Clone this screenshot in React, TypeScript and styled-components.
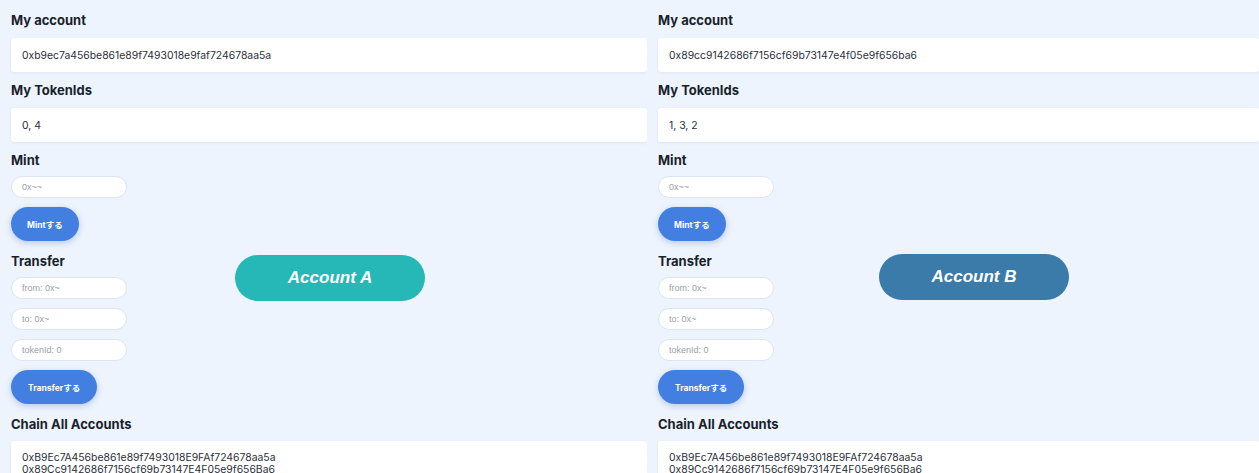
import React from 'react';
import styled, { createGlobalStyle } from 'styled-components';

const GlobalStyle = createGlobalStyle`
  html, body {
    margin: 0;
    padding: 0;
    background: #eef4fd;
    overflow: hidden;
  }
  body {
    font-family: Inter, 'Noto Sans CJK JP', sans-serif;
  }
`;

const Page = styled.div`
  display: flex;
  width: 1259px;
  height: 473px;
  overflow: hidden;
`;

const Panel = styled.div<{ width?: string }>`
  position: relative;
  box-sizing: border-box;
  width: ${({ width }) => width || 'auto'};
  flex: ${({ width }) => (width ? 'none' : '1')};
  padding: 10px 0 0 11px;
  display: flex;
  flex-direction: column;
  overflow: hidden;
`;

const Heading = styled.h2`
  margin: 0;
  height: 20px;
  line-height: 20px;
  font-size: 13px;
  font-weight: 700;
  color: #1a1f2c;
`;

const Card = styled.div`
  margin: 8px 0 8px;
  padding: 0 11px;
  min-height: 34px;
  display: flex;
  flex-direction: column;
  justify-content: center;
  background: #fff;
  border-radius: 3px;
  box-shadow: 0 1px 3px rgba(40, 70, 130, 0.08);
  font-size: 10.4px;
  color: #2a2f3a;
`;

const AccountsCard = styled(Card)`
  justify-content: flex-start;
  margin-top: 7px;
  padding-top: 11px;
  min-height: 60px;
  line-height: 12px;
`;

const Form = styled.div`
  display: flex;
  flex-direction: column;
  align-items: flex-start;
  gap: 9px;
  margin: 6px 0 10px;
`;

const Input = styled.input`
  box-sizing: border-box;
  width: 116px;
  height: 22px;
  padding: 0 10px;
  border: 1px solid #dbe5f6;
  border-radius: 11px;
  background: #fff;
  font-family: 'Liberation Sans', Arial, sans-serif;
  font-size: 9px;
  outline: none;
  &::placeholder {
    color: #9aa0a8;
  }
`;

const ActionButton = styled.button<{ pad?: number }>`
  height: 34px;
  padding: 0 ${({ pad }) => pad ?? 16}px;
  border: none;
  border-radius: 17px;
  background: #427fe0;
  color: #fff;
  font-family: Inter, 'Noto Sans CJK JP', sans-serif;
  font-size: 8.5px;
  font-weight: 700;
  box-shadow: 0 2px 6px rgba(50, 100, 200, 0.3);
`;

const Badge = styled.div<{ bg: string; left: number; top: number }>`
  position: absolute;
  left: ${({ left }) => left}px;
  top: ${({ top }) => top}px;
  width: 190px;
  height: 46px;
  border-radius: 23px;
  background: ${({ bg }) => bg};
  display: flex;
  align-items: center;
  justify-content: center;
  color: #fff;
  font-family: 'Liberation Sans', Arial, sans-serif;
  font-style: italic;
  font-weight: 700;
  font-size: 17px;
`;

const ALL_ACCOUNTS = [
  '0xB9Ec7A456be861e89f7493018E9FAf724678aa5a',
  '0x89Cc9142686f7156cf69b73147E4F05e9f656Ba6',
];

const AccountPanel = ({
  address,
  tokens,
  label,
  color,
  width,
  badgeLeft,
  badgeTop,
}: {
  address: string;
  tokens: string;
  label: string;
  color: string;
  width?: string;
  badgeLeft: number;
  badgeTop: number;
}) => (
  <Panel width={width}>
    <Heading>My account</Heading>
    <Card>{address}</Card>
    <Heading>My TokenIds</Heading>
    <Card>{tokens}</Card>
    <Heading>Mint</Heading>
    <Form>
      <Input placeholder="0x~~" />
      <ActionButton pad={16}>Mintする</ActionButton>
    </Form>
    <Heading>Transfer</Heading>
    <Form>
      <Input placeholder="from: 0x~" />
      <Input placeholder="to: 0x~" />
      <Input placeholder="tokenId: 0" />
      <ActionButton pad={17}>Transferする</ActionButton>
    </Form>
    <Heading>Chain All Accounts</Heading>
    <AccountsCard>
      {ALL_ACCOUNTS.map((a) => (
        <div key={a}>{a}</div>
      ))}
    </AccountsCard>
    <Badge bg={color} left={badgeLeft} top={badgeTop}>
      {label}
    </Badge>
  </Panel>
);

const App = () => (
  <>
    <GlobalStyle />
    <Page>
      <AccountPanel
        width="647px"
        address="0xb9ec7a456be861e89f7493018e9faf724678aa5a"
        tokens="0, 4"
        label="Account A"
        color="#25b8b6"
        badgeLeft={235}
        badgeTop={255}
      />
      <AccountPanel
        address="0x89cc9142686f7156cf69b73147e4f05e9f656ba6"
        tokens="1, 3, 2"
        label="Account B"
        color="#3a7ba9"
        badgeLeft={232}
        badgeTop={254}
      />
    </Page>
  </>
);

export default App;
